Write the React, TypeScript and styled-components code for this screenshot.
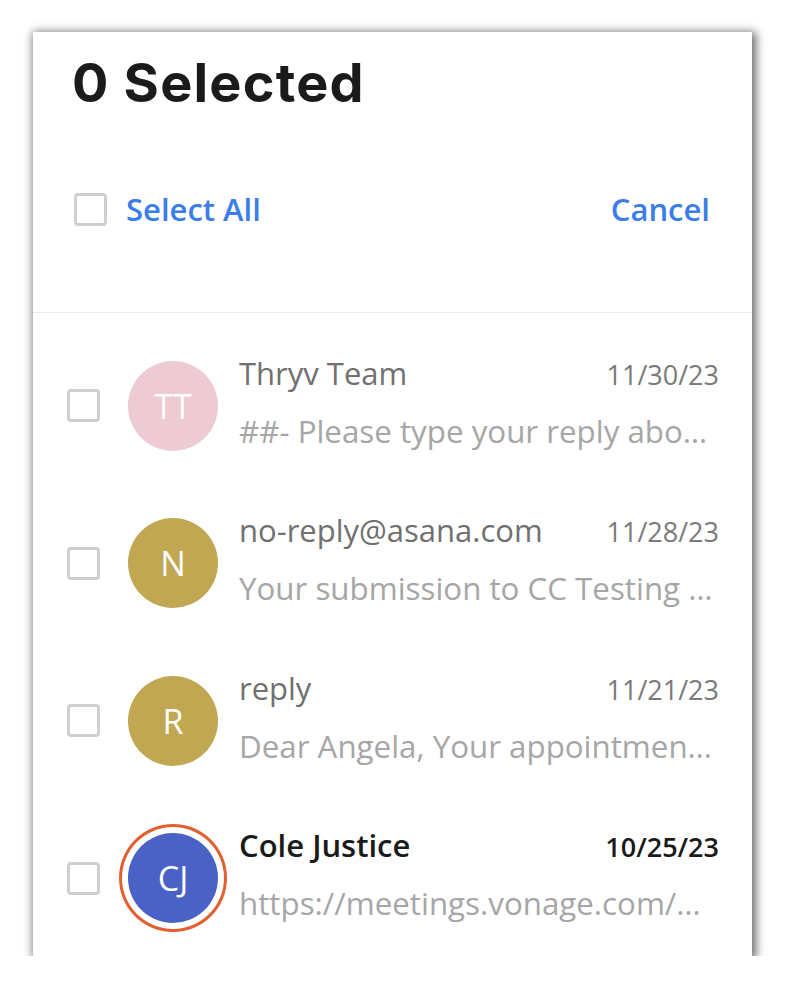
import React from 'react';
import styled, { createGlobalStyle } from 'styled-components';

const GlobalStyle = createGlobalStyle`
  html, body {
    margin: 0;
    padding: 0;
    background: #ffffff;
  }
  body {
    font-family: 'Open Sans', 'Liberation Sans', sans-serif;
  }
`;

type Message = {
  id: number;
  initials: string;
  color: string;
  name: string;
  date: string;
  preview: string;
  unread?: boolean;
};

const messages: Message[] = [
  {
    id: 1,
    initials: 'TT',
    color: '#eecad2',
    name: 'Thryv Team',
    date: '11/30/23',
    preview: '##- Please type your reply abo…',
  },
  {
    id: 2,
    initials: 'N',
    color: '#c1a752',
    name: 'no-reply@asana.com',
    date: '11/28/23',
    preview: 'Your submission to CC Testing …',
  },
  {
    id: 3,
    initials: 'R',
    color: '#c1a752',
    name: 'reply',
    date: '11/21/23',
    preview: 'Dear Angela, Your appointmen…',
  },
  {
    id: 4,
    initials: 'CJ',
    color: '#4a62c5',
    name: 'Cole Justice',
    date: '10/25/23',
    preview: 'https://meetings.vonage.com/…',
    unread: true,
  },
];

const App = () => {
  return (
    <>
      <GlobalStyle />
      <Card>
        <Header>
          <Title>0 Selected</Title>
          <Toolbar>
            <SelectAll>
              <Checkbox />
              <LinkButton>Select All</LinkButton>
            </SelectAll>
            <LinkButton>Cancel</LinkButton>
          </Toolbar>
        </Header>
        <List>
          {messages.map((m) => (
            <Row key={m.id}>
              <Checkbox />
              <Avatar color={m.color} $ring={m.unread}>
                {m.initials}
              </Avatar>
              <Body>
                <TopLine>
                  <Name $unread={m.unread}>{m.name}</Name>
                  <DateText $unread={m.unread}>{m.date}</DateText>
                </TopLine>
                <Preview>{m.preview}</Preview>
              </Body>
            </Row>
          ))}
        </List>
      </Card>
    </>
  );
};

export default App;

const Card = styled.div`
  margin: 32px 0 0 33px;
  width: 719px;
  height: 924px;
  background: #ffffff;
  box-shadow: 2px 2px 9px 2px rgba(0, 0, 0, 0.58);
  overflow: hidden;
  display: flex;
  flex-direction: column;
`;

const Header = styled.div`
  padding: 24px 42px 86px 41px;
  border-bottom: 1px solid #ececec;
`;

const Title = styled.h1`
  margin: 0 0 82px -2px;
  font-family: Inter, 'Liberation Sans', sans-serif;
  font-weight: 700;
  font-size: 54px;
  line-height: 1;
  color: #1b1b1b;
  letter-spacing: 1.2px;
`;

const Toolbar = styled.div`
  display: flex;
  align-items: center;
  justify-content: space-between;
  height: 34px;
`;

const SelectAll = styled.div`
  display: flex;
  align-items: center;
  gap: 19px;
`;

const Checkbox = styled.span`
  box-sizing: border-box;
  flex: none;
  width: 33px;
  height: 33px;
  border: 3px solid #cfcfcf;
  border-radius: 4px;
  background: #ffffff;
`;

const LinkButton = styled.button`
  border: 0;
  background: none;
  padding: 0;
  font-family: 'Open Sans', 'Liberation Sans', sans-serif;
  font-weight: 600;
  font-size: 31px;
  line-height: 34px;
  color: #3b7de9;
  cursor: pointer;
`;

const List = styled.div`
  padding-top: 14px;
  display: flex;
  flex-direction: column;
`;

const Row = styled.div`
  height: 157.5px;
  flex: none;
  display: flex;
  align-items: center;
  padding: 0 33px 0 34px;
  box-sizing: border-box;

  ${Checkbox} {
    margin-right: 28px;
  }
`;

const Avatar = styled.div<{ color: string; $ring?: boolean }>`
  flex: none;
  width: 90px;
  height: 90px;
  border-radius: 50%;
  background: ${(p) => p.color};
  color: #ffffff;
  display: flex;
  align-items: center;
  justify-content: center;
  font-family: 'Open Sans', 'Liberation Sans', sans-serif;
  font-size: 34px;
  font-weight: 500;
  margin-right: 21px;
  box-shadow: ${(p) => (p.$ring ? '0 0 0 6px #ffffff, 0 0 0 9px #e2602f' : 'none')};
`;

const Body = styled.div`
  flex: 1;
  min-width: 0;
  display: flex;
  flex-direction: column;
  gap: 18px;
  padding-bottom: 8px;
`;

const TopLine = styled.div`
  display: flex;
  align-items: baseline;
  justify-content: space-between;
  height: 40px;
`;

const Name = styled.span<{ $unread?: boolean }>`
  font-size: 31px;
  line-height: 40px;
  font-weight: ${(p) => (p.$unread ? 600 : 400)};
  color: ${(p) => (p.$unread ? '#1a1a1a' : '#707070')};
  white-space: nowrap;
  overflow: hidden;
  text-overflow: ellipsis;
`;

const DateText = styled.span<{ $unread?: boolean }>`
  flex: none;
  font-size: 27px;
  line-height: 40px;
  font-weight: ${(p) => (p.$unread ? 600 : 400)};
  color: ${(p) => (p.$unread ? '#1a1a1a' : '#7a7a7a')};
`;

const Preview = styled.div`
  font-size: 31.3px;
  line-height: 40px;
  color: #a6a6a6;
  white-space: nowrap;
  overflow: hidden;
  text-overflow: ellipsis;
`;
